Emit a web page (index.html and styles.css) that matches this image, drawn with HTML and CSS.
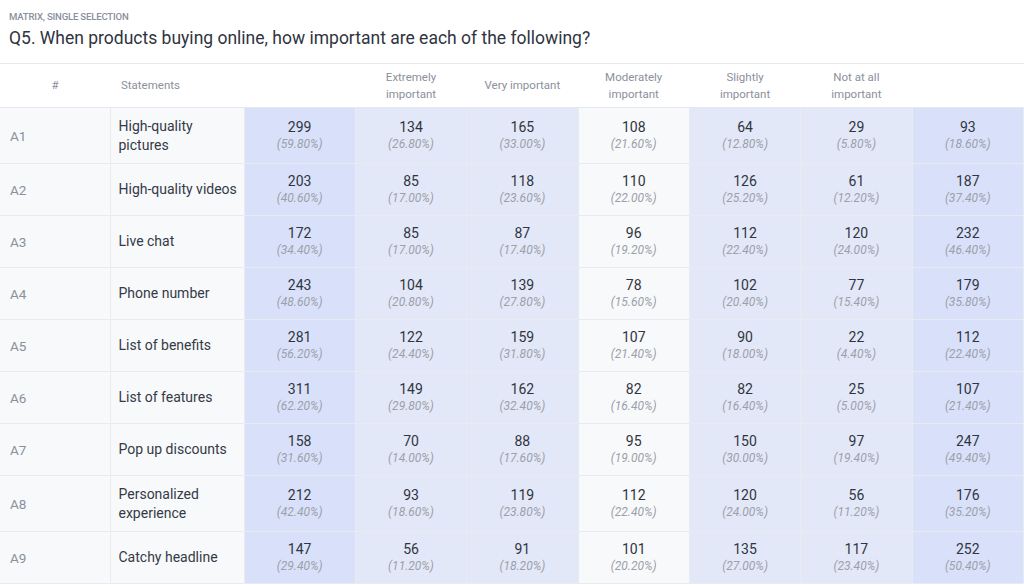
FILE: index.html
```html
<!DOCTYPE html>
<html lang="en">
<head>
<meta charset="utf-8">
<title>Q5 Matrix</title>
<link rel="stylesheet" href="styles.css">
</head>
<body>
<div class="question">
  <div class="qtype">MATRIX, SINGLE SELECTION</div>
  <h1 class="qtitle">Q5. When products buying online, how important are each of the following?</h1>
</div>
<table class="matrix">
  <colgroup>
    <col class="c-num"><col class="c-stmt">
    <col class="c-data"><col class="c-data"><col class="c-data"><col class="c-data"><col class="c-data"><col class="c-data"><col class="c-data">
  </colgroup>
  <thead>
    <tr>
      <th class="h-num">#</th>
      <th class="h-stmt">Statements</th>
      <th></th>
      <th>Extremely<br>important</th>
      <th>Very important</th>
      <th>Moderately<br>important</th>
      <th>Slightly<br>important</th>
      <th>Not at all<br>important</th>
      <th></th>
    </tr>
  </thead>
  <tbody>
    <tr>
      <td class="num">A1</td><td class="stmt">High-quality<br>pictures</td>
      <td class="d hi"><b>299</b><i>(59.80%)</i></td>
      <td class="d mid"><b>134</b><i>(26.80%)</i></td>
      <td class="d mid"><b>165</b><i>(33.00%)</i></td>
      <td class="d lo"><b>108</b><i>(21.60%)</i></td>
      <td class="d mid"><b>64</b><i>(12.80%)</i></td>
      <td class="d mid"><b>29</b><i>(5.80%)</i></td>
      <td class="d hi"><b>93</b><i>(18.60%)</i></td>
    </tr>
    <tr>
      <td class="num">A2</td><td class="stmt nowrap">High-quality videos</td>
      <td class="d hi"><b>203</b><i>(40.60%)</i></td>
      <td class="d mid"><b>85</b><i>(17.00%)</i></td>
      <td class="d mid"><b>118</b><i>(23.60%)</i></td>
      <td class="d lo"><b>110</b><i>(22.00%)</i></td>
      <td class="d mid"><b>126</b><i>(25.20%)</i></td>
      <td class="d mid"><b>61</b><i>(12.20%)</i></td>
      <td class="d hi"><b>187</b><i>(37.40%)</i></td>
    </tr>
    <tr>
      <td class="num">A3</td><td class="stmt">Live chat</td>
      <td class="d hi"><b>172</b><i>(34.40%)</i></td>
      <td class="d mid"><b>85</b><i>(17.00%)</i></td>
      <td class="d mid"><b>87</b><i>(17.40%)</i></td>
      <td class="d lo"><b>96</b><i>(19.20%)</i></td>
      <td class="d mid"><b>112</b><i>(22.40%)</i></td>
      <td class="d mid"><b>120</b><i>(24.00%)</i></td>
      <td class="d hi"><b>232</b><i>(46.40%)</i></td>
    </tr>
    <tr>
      <td class="num">A4</td><td class="stmt">Phone number</td>
      <td class="d hi"><b>243</b><i>(48.60%)</i></td>
      <td class="d mid"><b>104</b><i>(20.80%)</i></td>
      <td class="d mid"><b>139</b><i>(27.80%)</i></td>
      <td class="d lo"><b>78</b><i>(15.60%)</i></td>
      <td class="d mid"><b>102</b><i>(20.40%)</i></td>
      <td class="d mid"><b>77</b><i>(15.40%)</i></td>
      <td class="d hi"><b>179</b><i>(35.80%)</i></td>
    </tr>
    <tr>
      <td class="num">A5</td><td class="stmt">List of benefits</td>
      <td class="d hi"><b>281</b><i>(56.20%)</i></td>
      <td class="d mid"><b>122</b><i>(24.40%)</i></td>
      <td class="d mid"><b>159</b><i>(31.80%)</i></td>
      <td class="d lo"><b>107</b><i>(21.40%)</i></td>
      <td class="d mid"><b>90</b><i>(18.00%)</i></td>
      <td class="d mid"><b>22</b><i>(4.40%)</i></td>
      <td class="d hi"><b>112</b><i>(22.40%)</i></td>
    </tr>
    <tr>
      <td class="num">A6</td><td class="stmt">List of features</td>
      <td class="d hi"><b>311</b><i>(62.20%)</i></td>
      <td class="d mid"><b>149</b><i>(29.80%)</i></td>
      <td class="d mid"><b>162</b><i>(32.40%)</i></td>
      <td class="d lo"><b>82</b><i>(16.40%)</i></td>
      <td class="d mid"><b>82</b><i>(16.40%)</i></td>
      <td class="d mid"><b>25</b><i>(5.00%)</i></td>
      <td class="d hi"><b>107</b><i>(21.40%)</i></td>
    </tr>
    <tr>
      <td class="num">A7</td><td class="stmt">Pop up discounts</td>
      <td class="d hi"><b>158</b><i>(31.60%)</i></td>
      <td class="d mid"><b>70</b><i>(14.00%)</i></td>
      <td class="d mid"><b>88</b><i>(17.60%)</i></td>
      <td class="d lo"><b>95</b><i>(19.00%)</i></td>
      <td class="d mid"><b>150</b><i>(30.00%)</i></td>
      <td class="d mid"><b>97</b><i>(19.40%)</i></td>
      <td class="d hi"><b>247</b><i>(49.40%)</i></td>
    </tr>
    <tr>
      <td class="num">A8</td><td class="stmt">Personalized<br>experience</td>
      <td class="d hi"><b>212</b><i>(42.40%)</i></td>
      <td class="d mid"><b>93</b><i>(18.60%)</i></td>
      <td class="d mid"><b>119</b><i>(23.80%)</i></td>
      <td class="d lo"><b>112</b><i>(22.40%)</i></td>
      <td class="d mid"><b>120</b><i>(24.00%)</i></td>
      <td class="d mid"><b>56</b><i>(11.20%)</i></td>
      <td class="d hi"><b>176</b><i>(35.20%)</i></td>
    </tr>
    <tr>
      <td class="num">A9</td><td class="stmt">Catchy headline</td>
      <td class="d hi"><b>147</b><i>(29.40%)</i></td>
      <td class="d mid"><b>56</b><i>(11.20%)</i></td>
      <td class="d mid"><b>91</b><i>(18.20%)</i></td>
      <td class="d lo"><b>101</b><i>(20.20%)</i></td>
      <td class="d mid"><b>135</b><i>(27.00%)</i></td>
      <td class="d mid"><b>117</b><i>(23.40%)</i></td>
      <td class="d hi"><b>252</b><i>(50.40%)</i></td>
    </tr>
  </tbody>
</table>
</body>
</html>
```
FILE: styles.css
```css
html, body {
  margin: 0;
  padding: 0;
  background: #ffffff;
  font-family: Roboto, "Liberation Sans", Arial, sans-serif;
  color: #343a46;
  overflow: hidden;
}

.question {
  padding: 10px 9px 0 9px;
  height: 53px;
  box-sizing: border-box;
}

.qtype {
  font-size: 9.6px;
  line-height: 14px;
  font-weight: 500;
  color: #8a909c;
  letter-spacing: -0.2px;
}

.qtitle {
  margin: 3px 0 0 0;
  font-size: 17.5px;
  line-height: 22px;
  font-weight: 400;
  color: #2f3440;
}

.matrix {
  width: 1024px;
  table-layout: fixed;
  border-collapse: collapse;
  margin-top: 10px;
}

.c-num { width: 110px; }
.c-stmt { width: 134px; }

.matrix th {
  height: 43px;
  padding: 0 4px;
  font-size: 11.5px;
  line-height: 17px;
  font-weight: 400;
  color: #8b909b;
  text-align: center;
  vertical-align: middle;
  border-top: 1px solid #e6e9ef;
  border-bottom: 1px solid #e6e9ef;
  background: #ffffff;
}

.matrix th.h-stmt {
  text-align: left;
  padding-left: 11px;
}

.matrix td {
  border: 1px solid #e8ebf0;
  vertical-align: middle;
}

.matrix tr td:first-child { border-left: none; }

.num {
  background: #f8f9fb;
  font-size: 13.5px;
  color: #8b909b;
  padding: 0 10px;
}

.stmt {
  background: #f8f9fb;
  font-size: 14px;
  line-height: 19px;
  color: #343a46;
  padding: 8.5px 2px 8.5px 8px;
}

.stmt.nowrap { white-space: nowrap; }

.d {
  text-align: center;
  padding: 8px 4px 9px;
}

.d b {
  display: block;
  font-weight: 400;
  font-size: 14px;
  line-height: 18px;
  color: #30353f;
}

.d i {
  display: block;
  font-size: 12px;
  line-height: 16px;
  color: #9ba0aa;
}

.hi { background: #d9e1fa; border-color: #d9e1fa #e4e8f2; }
.mid { background: #e3e8f8; }
.lo { background: #f8f9fb; }
```
